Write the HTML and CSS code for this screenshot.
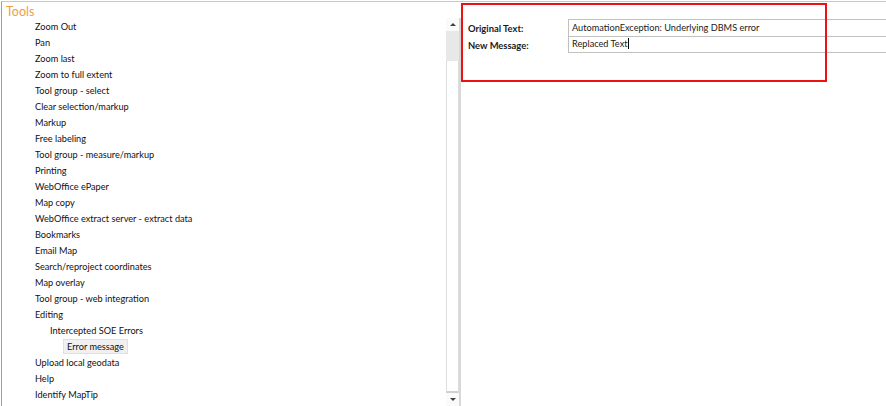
FILE: index.html
```html
<!DOCTYPE html>
<html>
<head>
<meta charset="utf-8">
<link rel="stylesheet" href="styles.css">
</head>
<body>
<div class="frame">
  <div class="tree-panel">
    <div class="tree-title">Tools</div>
    <ul class="tree">
      <li class="l1">Zoom Out</li>
      <li class="l1">Pan</li>
      <li class="l1">Zoom last</li>
      <li class="l1">Zoom to full extent</li>
      <li class="l1">Tool group - select</li>
      <li class="l1">Clear selection/markup</li>
      <li class="l1">Markup</li>
      <li class="l1">Free labeling</li>
      <li class="l1">Tool group - measure/markup</li>
      <li class="l1">Printing</li>
      <li class="l1">WebOffice ePaper</li>
      <li class="l1">Map copy</li>
      <li class="l1">WebOffice extract server - extract data</li>
      <li class="l1">Bookmarks</li>
      <li class="l1">Email Map</li>
      <li class="l1">Search/reproject coordinates</li>
      <li class="l1">Map overlay</li>
      <li class="l1">Tool group - web integration</li>
      <li class="l1">Editing</li>
      <li class="l2">Intercepted SOE Errors</li>
      <li class="l3"><span class="selected">Error message</span></li>
      <li class="l1">Upload local geodata</li>
      <li class="l1">Help</li>
      <li class="l1">Identify MapTip</li>
    </ul>
  </div>
  <div class="scrollbar">
    <div class="sb-btn"><span class="arrow-up"></span></div>
    <div class="sb-track"></div>
    <div class="sb-thumb"></div>
    <div class="sb-btn"><span class="arrow-down"></span></div>
  </div>
  <div class="detail-panel">
    <div class="form">
      <div class="row">
        <label class="label">Original Text:</label>
        <div class="field">AutomationException: Underlying DBMS error</div>
      </div>
      <div class="row">
        <label class="label">New Message:</label>
        <div class="field">Replaced Text<span class="caret"></span></div>
      </div>
    </div>
    <div class="highlight"></div>
  </div>
</div>
</body>
</html>
```

FILE: styles.css
```css
html, body {
  margin: 0;
  padding: 0;
  background: #ffffff;
  overflow: hidden;
}
body {
  width: 886px;
  height: 406px;
  font-family: "Lato", "Open Sans", sans-serif;
  color: #1a1a1a;
}
.frame {
  display: flex;
  height: 405px;
  margin-top: 1px;
  border-top: 1px solid #c8c8c8;
  margin-left: 1px;
  border-left: 1px solid #a0a0a0;
  box-sizing: border-box;
}
.tree-panel {
  width: 444px;
  flex: none;
  overflow: hidden;
}
.tree-title {
  color: #f0a040;
  font-size: 12.5px;
  line-height: 15px;
  padding-left: 4px;
  padding-top: 2px;
  height: 14px;
  overflow: visible;
}
.tree {
  list-style: none;
  margin: 0;
  padding: 1px 0 0 0;
}
.tree li {
  font-size: 9.2px;
  line-height: 16px;
  height: 16px;
  white-space: nowrap;
  color: #111;
}
.l1 { padding-left: 33px; }
.l2 { padding-left: 48px; }
.l3 { padding-left: 61px; }
.selected {
  display: inline-block;
  background: #f0f0f0;
  border: 1px solid #e0e0e0;
  line-height: 13px;
  padding: 0 3px;
}
.scrollbar {
  width: 13px;
  flex: none;
  display: flex;
  flex-direction: column;
  background: #f0f0f0;
  margin-top: 16px;
  border-right: 2px solid #d8d8d8;
}
.sb-btn {
  height: 13px;
  display: flex;
  align-items: center;
  justify-content: center;
  background: #fafafa;
  flex: none;
}
.arrow-up {
  width: 0; height: 0;
  border-left: 3px solid transparent;
  border-right: 3px solid transparent;
  border-bottom: 3px solid #404040;
}
.arrow-down {
  width: 0; height: 0;
  border-left: 3px solid transparent;
  border-right: 3px solid transparent;
  border-top: 3px solid #404040;
}
.sb-track {
  height: 30px;
  background: #e8e8e8;
  flex: none;
}
.sb-thumb {
  flex: 1;
  background: #ffffff;
  border-left: 1px solid #dcdcdc;
  border-right: 1px solid #dcdcdc;
  border-bottom: 2px solid #d0d0d0;
}
.detail-panel {
  flex: 1;
  position: relative;
  overflow: hidden;
}
.form {
  padding-top: 17px;
  padding-left: 7px;
}
.row {
  display: flex;
  height: 17px;
}
.label {
  width: 100px;
  flex: none;
  font-size: 9.4px;
  font-weight: bold;
  line-height: 17px;
  padding-top: 1px;
}
.field {
  width: 400px;
  flex: none;
  border: 1px solid #c0c0c0;
  font-size: 9.2px;
  line-height: 15px;
  padding-left: 3px;
  box-sizing: border-box;
  height: 18px;
  white-space: nowrap;
}
.row + .row .field {
  border-top: none;
  height: 17px;
}
.caret {
  display: inline-block;
  width: 1px;
  height: 11px;
  background: #000;
  vertical-align: -2px;
}
.highlight {
  position: absolute;
  left: 0;
  top: 1px;
  width: 366px;
  height: 79px;
  border: 2px solid #ee1111;
  box-sizing: border-box;
}
```
